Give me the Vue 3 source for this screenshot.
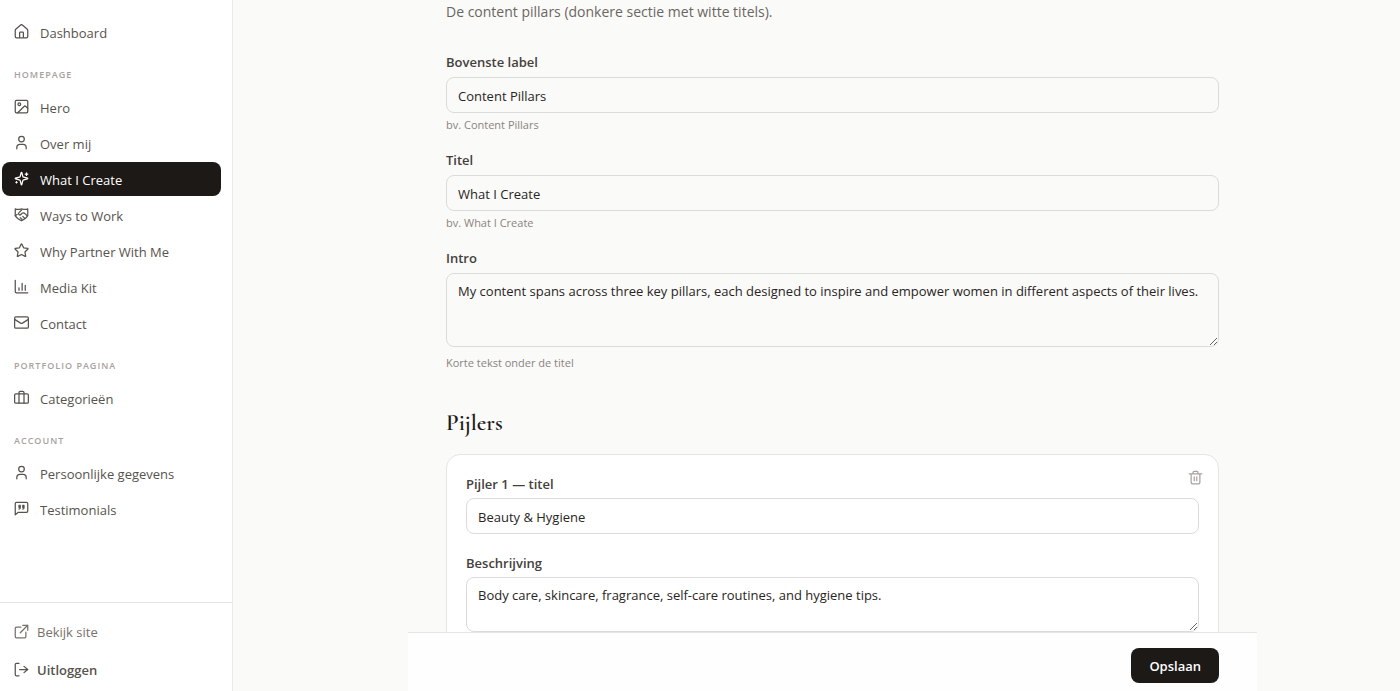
<script setup>
import { ref } from 'vue'

const icons = {
  home: '<path d="M15 21v-7a1 1 0 0 0-1-1h-4a1 1 0 0 0-1 1v7"/><path d="M2 10a2 2 0 0 1 .7-1.500l8-7a2 2 0 0 1 2.600 0l8 7A2 2 0 0 1 22 10v10a2 2 0 0 1-2 2H4a2 2 0 0 1-2-2z"/>',
  image: '<rect width="20" height="20" x="2" y="2" rx="2"/><circle cx="8.500" cy="8.500" r="2.200"/><path d="m22 15-3.100-3.100a2 2 0 0 0-2.800 0L6 22"/>',
  user: '<circle cx="12" cy="6.500" r="4.500"/><path d="M19.500 22v-2a5 5 0 0 0-5-5h-5a5 5 0 0 0-5 5v2"/>',
  sparkles: '<path d="M9.940 15.500A2 2 0 0 0 8.500 14.060l-6.140-1.580a.5.5 0 0 1 0-.96L8.500 9.940A2 2 0 0 0 9.940 8.500l1.580-6.140a.5.5 0 0 1 .96 0l1.580 6.140a2 2 0 0 0 1.440 1.440l6.140 1.580a.5.5 0 0 1 0 .96l-6.140 1.580a2 2 0 0 0-1.440 1.440l-1.580 6.140a.5.5 0 0 1-.96 0z"/><path d="M20 3v4M22 5h-4M4 17v2M5 18H3"/>',
  handshake: '<path d="M2 3c3 2 6 1 10 0 4 1 7 2 10 0v11c-2 4-6 6-10 8-4-2-8-4-10-8z"/><path d="M12 5 8 9a2 2 0 0 0 0 3c1 1 2 1 3 0l2-2c2-1 4 0 5 1l3 3M17 18l-3-3M13 20l-3-3M2 14l3-2"/>',
  star: '<path d="M11.500 1.800a.55.55 0 0 1 1 0l2.900 5.900 6.600.9a.55.55 0 0 1 .3.950L17.500 14.300l1.200 6.600a.55.55 0 0 1-.8.560L12 18.400l-5.900 3.060a.55.55 0 0 1-.8-.560l1.200-6.600L1.700 9.550a.55.55 0 0 1 .3-.950l6.600-.9z"/>',
  chart: '<path d="M2 2v18a2 2 0 0 0 2 2h18M8 18v-4M13 18V7M18 18v-8"/>',
  mail: '<rect width="22" height="18" x="1" y="3" rx="2"/><path d="m23 7-9.500 6a3 3 0 0 1-3 0L1 7"/>',
  luggage: '<rect width="22" height="15" x="1" y="6" rx="2"/><path d="M16 21V4a2 2 0 0 0-2-2h-4a2 2 0 0 0-2 2v17"/>',
  quote: '<path d="M22 16a2 2 0 0 1-2 2H7l-5 4V4a2 2 0 0 1 2-2h16a2 2 0 0 1 2 2z"/><path d="M8 13c1.500-.5 2-1 2-2V7H8v3h2M14 13c1.500-.5 2-1 2-2V7h-2v3h2"/>',
  external: '<path d="M14 2h8v8M22 2 10 14M19 13v7a2 2 0 0 1-2 2H4a2 2 0 0 1-2-2V7a2 2 0 0 1 2-2h7"/>',
  logout: '<path d="M8 2H4a2 2 0 0 0-2 2v16a2 2 0 0 0 2 2h4M16 17l6-5-6-5M22 12H9"/>',
  trash: '<path d="M2 6h20M19 6v14a2 2 0 0 1-2 2H7a2 2 0 0 1-2-2V6M8 6V4a2 2 0 0 1 2-2h4a2 2 0 0 1 2 2v2M10 11v6M14 11v6"/>',
}

const groups = [
  { title: '', items: [['home', 'Dashboard']] },
  {
    title: 'Homepage',
    items: [
      ['image', 'Hero'],
      ['user', 'Over mij'],
      ['sparkles', 'What I Create'],
      ['handshake', 'Ways to Work'],
      ['star', 'Why Partner With Me'],
      ['chart', 'Media Kit'],
      ['mail', 'Contact'],
    ],
  },
  { title: 'Portfolio pagina', items: [['luggage', 'Categorieën']] },
  { title: 'Account', items: [['user', 'Persoonlijke gegevens'], ['quote', 'Testimonials']] },
]

const active = ref('What I Create')
const label = ref('Content Pillars')
const title = ref('What I Create')
const intro = ref('My content spans across three key pillars, each designed to inspire and empower women in different aspects of their lives.')
const pillarTitle = ref('Beauty & Hygiene')
const pillarText = ref('Body care, skincare, fragrance, self-care routines, and hygiene tips.')
</script>

<template>
  <div class="layout">
    <aside class="sidebar">
      <nav class="nav">
        <section v-for="g in groups" :key="g.title" class="group">
          <h2 v-if="g.title" class="group-title">{{ g.title }}</h2>
          <a
            v-for="[icon, name] in g.items"
            :key="name"
            href="#"
            class="nav-item"
            :class="{ active: active === name }"
            @click.prevent="active = name"
          >
            <svg class="icon" viewBox="0 0 24 24" aria-hidden="true" v-html="icons[icon]"></svg>
            <span>{{ name }}</span>
          </a>
        </section>
      </nav>
      <div class="side-footer">
        <a href="#" class="side-link"><svg class="icon" viewBox="0 0 24 24" aria-hidden="true" v-html="icons.external"></svg>Bekijk site</a>
        <button type="button" class="side-link logout"><svg class="icon" viewBox="0 0 24 24" aria-hidden="true" v-html="icons.logout"></svg>Uitloggen</button>
      </div>
    </aside>

    <main class="main">
      <form class="form" @submit.prevent>
        <div class="content">
          <p class="subtitle">De content pillars (donkere sectie met witte titels).</p>
          <div class="fields">
            <div class="field">
              <label for="label">Bovenste label</label>
              <input id="label" v-model="label" type="text" />
              <p class="hint">bv. Content Pillars</p>
            </div>
            <div class="field">
              <label for="title">Titel</label>
              <input id="title" v-model="title" type="text" />
              <p class="hint">bv. What I Create</p>
            </div>
            <div class="field">
              <label for="intro">Intro</label>
              <textarea id="intro" v-model="intro" class="tall"></textarea>
              <p class="hint area-hint">Korte tekst onder de titel</p>
            </div>
          </div>
          <h2 class="heading">Pijlers</h2>
          <section class="card">
            <button type="button" class="remove" aria-label="Verwijder pijler 1">
              <svg class="icon" viewBox="0 0 24 24" aria-hidden="true" v-html="icons.trash"></svg>
            </button>
            <div class="field">
              <label for="pillar-title">Pijler 1 — titel</label>
              <input id="pillar-title" v-model="pillarTitle" type="text" />
            </div>
            <div class="field">
              <label for="pillar-text">Beschrijving</label>
              <textarea id="pillar-text" v-model="pillarText"></textarea>
            </div>
          </section>
        </div>
        <div class="actions">
          <button type="submit" class="save">Opslaan</button>
        </div>
      </form>
    </main>
  </div>
</template>

<style>
body {
  margin: 0;
  background: #fafaf9;
}
</style>

<style scoped>
.layout,
.layout * {
  box-sizing: border-box;
}
.layout {
  display: flex;
  height: 100vh;
  overflow: hidden;
  color: #292524;
  font-family: "Open Sans", "Noto Sans", sans-serif;
  font-size: 13px;
  line-height: 18px;
}
p,
h2 {
  margin: 0;
}
.sidebar {
  display: flex;
  flex: none;
  flex-direction: column;
  width: 233px;
  background: #fff;
  border-right: 1px solid #eceae9;
}
.nav {
  flex: 1;
  min-height: 0;
  padding: 15px 11px 0 2px;
  overflow: hidden;
}
.group {
  display: flex;
  flex-direction: column;
  gap: 2px;
}
.group-title {
  margin: 18px 0 5px;
  padding-left: 12px;
  color: #a8a29e;
  font-size: 9px;
  font-weight: 600;
  line-height: 16px;
  letter-spacing: 1px;
  text-transform: uppercase;
}
.icon {
  flex: none;
  width: 15px;
  height: 15px;
  fill: none;
  stroke: currentColor;
  stroke-width: 2;
  stroke-linecap: round;
  stroke-linejoin: round;
}
.nav-item {
  display: flex;
  align-items: center;
  gap: 11px;
  height: 34px;
  padding: 0 12px;
  color: #57534e;
  text-decoration: none;
  border-radius: 8px;
}
.nav-item .icon,
.side-link .icon {
  margin-bottom: 1px;
}
.nav-item span {
  padding-top: 1px;
}
.nav-item.active {
  color: #fff;
  background: #1c1917;
}
.side-footer {
  display: flex;
  flex-direction: column;
  gap: 4px;
  padding: 12px 2px 4px;
  border-top: 1px solid #e7e5e4;
}
.side-link {
  display: flex;
  align-items: center;
  gap: 8px;
  height: 34px;
  padding: 0 12px;
  color: #78716c;
  font: inherit;
  text-decoration: none;
  background: none;
  border: 0;
}
.logout {
  color: #57534e;
  font-weight: 600;
}
.main {
  display: flex;
  flex: 1;
  justify-content: center;
  min-width: 0;
  padding-left: 32px;
}
.form {
  display: flex;
  flex-direction: column;
  width: 100%;
  max-width: 849px;
}
.content {
  flex: 1;
  min-height: 0;
  padding: 0 38px;
  overflow: hidden;
}
.subtitle {
  margin-bottom: 29px;
  color: #6b6662;
  font-size: 14px;
  line-height: 24px;
}
.fields {
  display: flex;
  flex-direction: column;
  gap: 18px;
}
.field {
  display: flex;
  flex-direction: column;
}
label {
  margin-bottom: 6px;
  color: #44403c;
  font-weight: 600;
}
input,
textarea {
  width: 100%;
  color: #292524;
  font: inherit;
  background: transparent;
  border: 1px solid #dddbd9;
  border-radius: 8px;
}
input {
  height: 36px;
  padding: 1px 11px 0;
}
textarea {
  height: 55px;
  padding: 8px 11px;
  resize: vertical;
}
.tall {
  height: 74px;
}
.hint {
  margin-top: 4px;
  color: #8a847f;
  font-size: 11px;
  line-height: 16px;
}
.area-hint {
  margin-top: 8px;
}
.heading {
  margin: 38px 0 17px;
  color: #1c1917;
  font-family: "Cormorant Garamond", "Liberation Serif", serif;
  font-size: 23px;
  font-weight: 600;
  line-height: 28px;
}
.card {
  position: relative;
  display: flex;
  flex-direction: column;
  gap: 20px;
  padding: 20px 19px;
  background: #fff;
  border: 1px solid #e7e5e4;
  border-radius: 14px;
}
.card label {
  margin-bottom: 5px;
}
.remove {
  position: absolute;
  top: 12px;
  right: 12px;
  display: flex;
  padding: 3px;
  color: #a8a29e;
  background: none;
  border: 0;
}
.actions {
  display: flex;
  justify-content: flex-end;
  padding: 15px 38px 8px;
  background: #fefefe;
  border-top: 1px solid #e7e5e4;
}
.save {
  height: 35px;
  padding: 0 18px;
  color: #fff;
  font: inherit;
  font-weight: 600;
  background: #1c1917;
  border: 0;
  border-radius: 8px;
}
</style>
